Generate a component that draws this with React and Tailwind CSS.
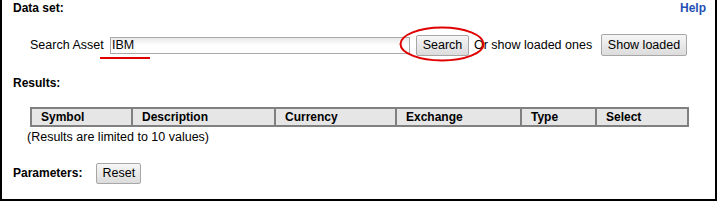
import React from "react";

const font = { fontFamily: '"Liberation Sans", Arial, sans-serif' };

function Btn({ children, className = "" }) {
  return (
    <button
      type="button"
      className={
        "flex items-center justify-center rounded-[2px] border border-[#a7a7a7] bg-gradient-to-b from-[#f6f6f6] to-[#dcdcdc] text-[12.5px] text-black " +
        className
      }
    >
      {children}
    </button>
  );
}

const columns = [
  { name: "Symbol", w: "w-[101px]" },
  { name: "Description", w: "w-[143px]" },
  { name: "Currency", w: "w-[121px]" },
  { name: "Exchange", w: "w-[125px]" },
  { name: "Type", w: "w-[75px]" },
  { name: "Select", w: "flex-1" },
];

export default function App() {
  return (
    <div
      style={font}
      className="relative flex h-[201px] w-[717px] flex-col border-b-2 border-l-2 border-r-2 border-black bg-white text-[12.5px] leading-[14px] text-black"
    >
      {/* header */}
      <div className="mt-[1px] flex h-[14px] items-center justify-between pl-[11px] pr-[9px] text-[12px]">
        <span className="font-bold">Data set:</span>
        <a href="#" className="font-bold text-[#1f4fb5]">
          Help
        </a>
      </div>

      {/* search row */}
      <div className="mt-[18px] flex h-[24px] items-center pl-[28px]">
        <span className="w-[73px] whitespace-nowrap">Search Asset</span>
        <div className="ml-[7px] flex h-[17px] w-[300px] items-center border border-[#aaaaaa] bg-gradient-to-b from-[#e9e9e9] to-white to-50% pl-[1px]">
          IBM
        </div>
        <Btn className="ml-[6px] h-[21px] w-[53px]">Search</Btn>
        <span className="ml-[5px] w-[116px] whitespace-nowrap">Or show loaded ones</span>
        <Btn className="ml-[11px] h-[22px] w-[86px]">Show loaded</Btn>
      </div>

      {/* results */}
      <div className="mt-[19px] flex h-[14px] items-center pl-[11px] text-[12px]">
        <span className="font-bold">Results:</span>
      </div>

      <div className="ml-[28px] mt-[17px] flex h-[20px] w-[659px] border border-[#808080] bg-[#e6e6e6] text-[12px]">
        {columns.map((c) => (
          <div
            key={c.name}
            className={
              "flex items-center border border-[#808080] pl-[9px] font-bold " + c.w
            }
          >
            {c.name}
          </div>
        ))}
      </div>

      <div className="mt-[3px] flex h-[14px] items-center pl-[25px]">
        (Results are limited to 10 values)
      </div>

      {/* parameters */}
      <div className="mt-[18px] flex h-[22px] items-center pl-[11px]">
        <span className="font-bold text-[12px]">Parameters:</span>
        <Btn className="ml-[14px] h-[21px] w-[45px]">Reset</Btn>
      </div>

      {/* annotations */}
      <div className="absolute left-[98px] top-[57px] h-[2px] w-[50px] bg-[#e00000]" />
      <svg
        className="pointer-events-none absolute left-[396px] top-[25px]"
        width="88"
        height="38"
        viewBox="0 0 88 38"
      >
        <ellipse cx="44" cy="19" rx="41.5" ry="16.5" fill="none" stroke="#e00000" strokeWidth="2" />
      </svg>
    </div>
  );
}
